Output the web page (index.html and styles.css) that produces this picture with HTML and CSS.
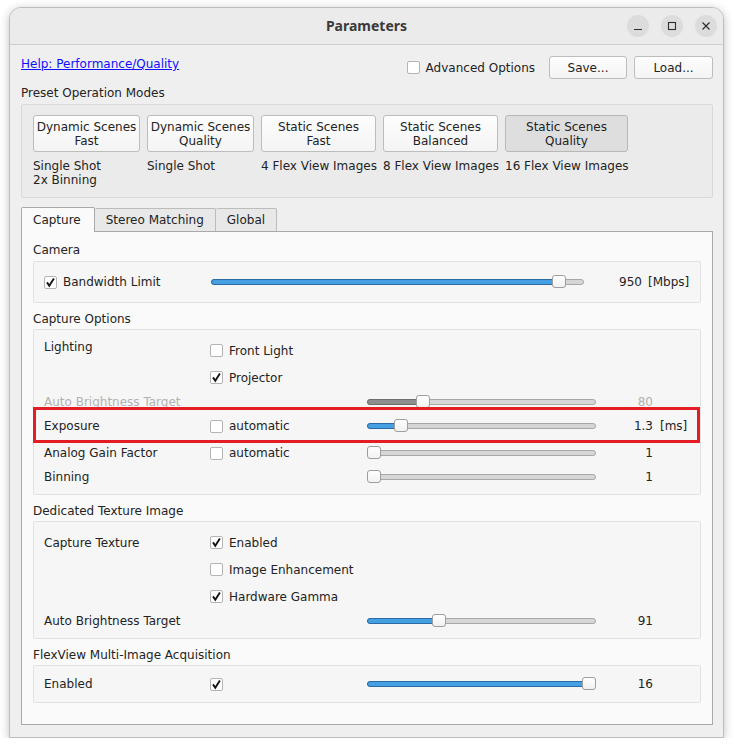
FILE: index.html
```html
<!DOCTYPE html>
<html lang="en">
<head>
    <meta charset="UTF-8">
    <title>Parameters</title>
    <link rel="stylesheet" href="styles.css">
</head>
<body>
    <div class="window">
        <div class="titlebar">
            <div></div>
            <div class="title">Parameters</div>
            <div class="wm-buttons">
                <span class="wm-btn">
                    <svg width="10" height="10" viewBox="0 0 10 10"><path d="M1 8.5 H9" stroke="#2e2e2e" stroke-width="1.2"/></svg>
                </span>
                <span class="wm-btn">
                    <svg width="10" height="10" viewBox="0 0 10 10"><rect x="1.5" y="1.5" width="7" height="7" fill="none" stroke="#2e2e2e" stroke-width="1.1"/></svg>
                </span>
                <span class="wm-btn">
                    <svg width="10" height="10" viewBox="0 0 10 10"><path d="M1.5 1.5 L8.5 8.5 M8.5 1.5 L1.5 8.5" stroke="#2e2e2e" stroke-width="1.2"/></svg>
                </span>
            </div>
        </div>

        <div class="content">
            <div class="toprow">
                <a class="help-link" href="#">Help: Performance/Quality</a>
                <div class="toprow-right">
                    <label class="check"><span class="box"></span>Advanced Options</label>
                    <button class="btn save-btn">Save...</button>
                    <button class="btn load-btn">Load...</button>
                </div>
            </div>

            <div class="section-label top">Preset Operation Modes</div>
            <div class="preset-box">
                <div class="preset-grid">
                    <button class="btn preset">Dynamic Scenes<br>Fast</button>
                    <button class="btn preset">Dynamic Scenes<br>Quality</button>
                    <button class="btn preset">Static Scenes<br>Fast</button>
                    <button class="btn preset">Static Scenes<br>Balanced</button>
                    <button class="btn preset pressed">Static Scenes<br>Quality</button>
                    <div class="preset-desc">Single Shot<br>2x Binning</div>
                    <div class="preset-desc">Single Shot</div>
                    <div class="preset-desc">4 Flex View Images</div>
                    <div class="preset-desc">8 Flex View Images</div>
                    <div class="preset-desc">16 Flex View Images</div>
                </div>
            </div>

            <div class="tabs">
                <div class="tab active">Capture</div>
                <div class="tab">Stereo Matching</div>
                <div class="tab">Global</div>
            </div>

            <div class="pane">
                <div class="section-label first">Camera</div>
                <div class="group">
                    <div class="cam-row">
                        <label class="check"><span class="box"><svg viewBox="0 0 11 11"><path d="M2 5.4 L4.3 8.8 L8.9 1.6"/></svg></span>Bandwidth Limit</label>
                        <div class="slider" style="--p: 0.95"><div class="groove"></div><div class="fill"></div><div class="handle"></div></div>
                        <span class="value">950</span>
                        <span class="unit">[Mbps]</span>
                    </div>
                </div>

                <div class="section-label">Capture Options</div>
                <div class="group capture">
                    <div class="row h27">
                        <span class="label lift">Lighting</span>
                        <label class="check"><span class="box"></span>Front Light</label>
                    </div>
                    <div class="row h27">
                        <span class="label"></span>
                        <label class="check"><span class="box"><svg viewBox="0 0 11 11"><path d="M2 5.4 L4.3 8.8 L8.9 1.6"/></svg></span>Projector</label>
                    </div>
                    <div class="row h22 disabled">
                        <span class="label">Auto Brightness Target</span>
                        <span></span>
                        <div class="slider off" style="--p: 0.23"><div class="groove"></div><div class="fill"></div><div class="handle"></div></div>
                        <span class="value">80</span>
                    </div>
                    <div class="row h26">
                        <span class="label">Exposure</span>
                        <label class="check"><span class="box"></span>automatic</label>
                        <div class="slider" style="--p: 0.125"><div class="groove"></div><div class="fill"></div><div class="handle"></div></div>
                        <span class="value">1.3</span>
                        <span class="unit">[ms]</span>
                        <div class="highlight"></div>
                    </div>
                    <div class="row h28">
                        <span class="label">Analog Gain Factor</span>
                        <label class="check"><span class="box"></span>automatic</label>
                        <div class="slider" style="--p: 0"><div class="groove"></div><div class="fill"></div><div class="handle"></div></div>
                        <span class="value">1</span>
                    </div>
                    <div class="row h20">
                        <span class="label">Binning</span>
                        <span></span>
                        <div class="slider" style="--p: 0"><div class="groove"></div><div class="fill"></div><div class="handle"></div></div>
                        <span class="value">1</span>
                    </div>
                </div>

                <div class="section-label">Dedicated Texture Image</div>
                <div class="group">
                    <div class="row h27">
                        <span class="label">Capture Texture</span>
                        <label class="check"><span class="box"><svg viewBox="0 0 11 11"><path d="M2 5.4 L4.3 8.8 L8.9 1.6"/></svg></span>Enabled</label>
                    </div>
                    <div class="row h27">
                        <span class="label"></span>
                        <label class="check"><span class="box"></span>Image Enhancement</label>
                    </div>
                    <div class="row h27">
                        <span class="label"></span>
                        <label class="check"><span class="box"><svg viewBox="0 0 11 11"><path d="M2 5.4 L4.3 8.8 L8.9 1.6"/></svg></span>Hardware Gamma</label>
                    </div>
                    <div class="row h22">
                        <span class="label">Auto Brightness Target</span>
                        <span></span>
                        <div class="slider" style="--p: 0.3"><div class="groove"></div><div class="fill"></div><div class="handle"></div></div>
                        <span class="value">91</span>
                    </div>
                </div>

                <div class="section-label">FlexView Multi-Image Acquisition</div>
                <div class="group">
                    <div class="row h36">
                        <span class="label">Enabled</span>
                        <label class="check"><span class="box"><svg viewBox="0 0 11 11"><path d="M2 5.4 L4.3 8.8 L8.9 1.6"/></svg></span></label>
                        <div class="slider" style="--p: 1"><div class="groove"></div><div class="fill"></div><div class="handle"></div></div>
                        <span class="value">16</span>
                    </div>
                </div>
            </div>
        </div>
    </div>
</body>
</html>
```

FILE: styles.css
```css
:root {
    --text-color: #232323;
    --window-bg: #efefef;
    --pane-bg: #fafafa;
    --group-bg: #f6f6f6;
    --group-border: #e2e2e2;
    --accent: #45a0e3;
    --accent-dark: #2b6aa3;
    --disabled: #b2b2b2;
}

body {
    margin: 0;
    background: #ffffff;
    font-family: 'DejaVu Sans', 'Liberation Sans', sans-serif;
    font-size: 12px;
    line-height: 14px;
    color: var(--text-color);
}

.window {
    box-sizing: border-box;
    width: 715px;
    height: 731px;
    margin: 7px 0 0 9px;
    background: var(--window-bg);
    border: 1px solid #bdbdbd;
    border-radius: 12px 12px 0 0;
    box-shadow: 0 2px 10px rgba(0, 0, 0, 0.25);
    overflow: hidden;
}

/* Title bar */
.titlebar {
    height: 36px;
    display: grid;
    grid-template-columns: 1fr auto 1fr;
    align-items: center;
    background: #ebebeb;
    border-bottom: 1px solid #cdcdcd;
}

.title {
    font-family: 'Noto Sans', 'DejaVu Sans', sans-serif;
    font-weight: 700;
    font-size: 14px;
    color: #3a3a3a;
}

.wm-buttons {
    display: flex;
    justify-content: flex-end;
    gap: 12px;
    padding-right: 6px;
}

.wm-btn {
    width: 22px;
    height: 22px;
    border-radius: 50%;
    background: #dcdcdc;
    display: flex;
    align-items: center;
    justify-content: center;
}

/* Main content */
.content {
    padding: 11px 10px 0 11px;
}

.toprow {
    display: flex;
    justify-content: space-between;
    height: 23px;
}

.help-link {
    color: #1010ff;
    text-decoration: underline;
    align-self: flex-start;
    margin-top: 1px;
}

.toprow-right {
    display: flex;
    align-items: center;
}

.toprow-right .check {
    margin-right: 14px;
}

.btn {
    font-family: inherit;
    font-size: 12px;
    line-height: 14px;
    color: var(--text-color);
    background: linear-gradient(#fdfdfd, #f4f4f4);
    border: 1px solid #bdbdbd;
    border-radius: 3px;
    padding: 0;
}

.save-btn {
    width: 78px;
    height: 23px;
}

.load-btn {
    width: 79px;
    height: 23px;
    margin-left: 7px;
}

.section-label {
    box-sizing: border-box;
    height: 26px;
    padding-top: 9px;
}

.section-label.first {
    padding-top: 8px;
}

.section-label.top {
    height: 25px;
    padding-top: 7px;
}

.preset-box {
    background: #ebebeb;
    border: 1px solid #d9d9d9;
    border-radius: 2px;
    padding: 10px 11px 10px 11px;
}

.preset-grid {
    display: grid;
    grid-template-columns: 107px 107px 115px 115px 123px;
    column-gap: 7px;
    row-gap: 7px;
}

.preset {
    height: 37px;
    white-space: nowrap;
}

.preset.pressed {
    background: #dedede;
    border-color: #b8b8b8;
}

.preset-desc {
    white-space: nowrap;
    height: 28px;
}

/* Tabs */
.tabs {
    display: flex;
    align-items: flex-end;
    margin-top: 8px;
    height: 25px;
}

.tab {
    box-sizing: border-box;
    height: 23px;
    padding: 0 11px;
    display: flex;
    align-items: center;
    background: #e8e8e8;
    border: 1px solid #bcbcbc;
    border-bottom: none;
    border-left: none;
    border-radius: 2px 2px 0 0;
}

.tab.active {
    height: 25px;
    padding: 0 13px 0 11px;
    background: var(--pane-bg);
    border: 1px solid #a9a9a9;
    border-bottom: none;
    position: relative;
    top: 1px;
}

.pane {
    box-sizing: border-box;
    height: 494px;
    background: var(--pane-bg);
    border: 1px solid #a9a9a9;
    padding: 3px 11px 0 11px;
}

/* Group boxes */
.group {
    background: var(--group-bg);
    border: 1px solid var(--group-border);
    border-radius: 2px;
    padding: 7px 10px 6px 10px;
}

.group.capture {
    padding-bottom: 7px;
}

.cam-row {
    display: grid;
    grid-template-columns: 167px 373px 58px auto;
    align-items: center;
    height: 40px;
    margin: -7px 0 -6px 0;
}

.row {
    position: relative;
    display: grid;
    grid-template-columns: 166px 157px 229px 57px auto;
    align-items: center;
}

.h20 { height: 20px; }
.h22 { height: 22px; }
.h26 { height: 26px; }
.h27 { height: 27px; }
.h28 { height: 28px; }
.h36 { height: 36px; margin: -7px 0 -6px 0; }

.label.lift {
    align-self: start;
    margin-top: 3px;
}

.disabled .label,
.disabled .value {
    color: var(--disabled);
}

.value {
    text-align: right;
}

.unit {
    margin-left: 6px;
}

.row .unit {
    margin-left: 7px;
}

/* Red annotation frame */
.highlight {
    position: absolute;
    top: -6px;
    bottom: -4px;
    left: -11px;
    right: -10px;
    border: 3px solid #e41d25;
    pointer-events: none;
}

/* Checkboxes */
.check {
    display: flex;
    align-items: center;
    white-space: nowrap;
}

.box {
    box-sizing: border-box;
    width: 13px;
    height: 13px;
    margin-right: 6px;
    background: #ffffff;
    border: 1px solid #b4b4b4;
    border-radius: 2px;
    display: flex;
}

.box svg {
    width: 11px;
    height: 11px;
}

.box svg path {
    fill: none;
    stroke: #151515;
    stroke-width: 1.9;
}

/* Sliders */
.slider {
    position: relative;
    height: 14px;
}

.groove,
.fill {
    position: absolute;
    top: 4px;
    height: 4px;
    border-radius: 3px;
}

.groove {
    left: 0;
    right: 0;
    background: #d6d6d6;
    border: 1px solid #a8a8a8;
}

.fill {
    left: 0;
    width: calc(var(--p) * (100% - 14px) + 6px);
    background: var(--accent);
    border: 1px solid var(--accent-dark);
}

.slider.off .fill {
    background: #8e8e8e;
    border-color: #6e6e6e;
}

.handle {
    position: absolute;
    top: 0;
    left: calc(var(--p) * (100% - 14px));
    box-sizing: border-box;
    width: 14px;
    height: 13px;
    background: linear-gradient(#ffffff, #f1f1f1);
    border: 1px solid #9e9e9e;
    border-radius: 3px;
}
```
